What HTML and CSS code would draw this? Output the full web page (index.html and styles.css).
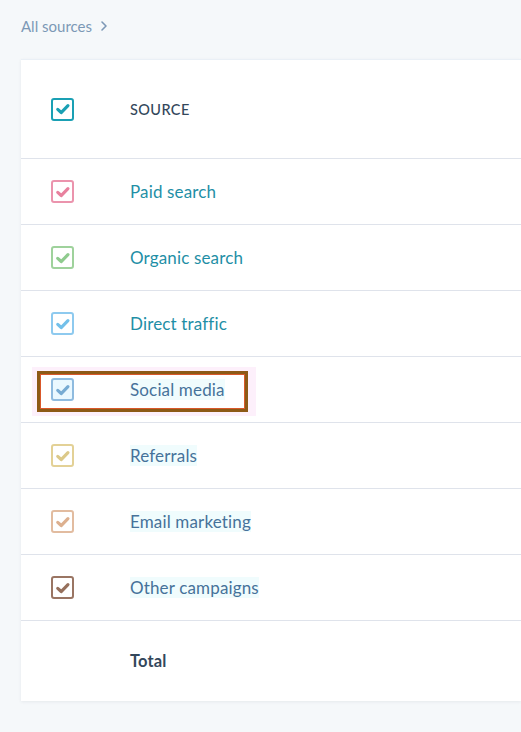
FILE: index.html
```html
<!DOCTYPE html>
<html>
<head>
<meta charset="utf-8">
<link rel="stylesheet" href="styles.css">
</head>
<body>
<nav class="crumb">All sources <svg class="chev" viewBox="0 0 8 12"><path d="M2 2l4 4-4 4"/></svg></nav>
<div class="card">
  <div class="row head">
    <span class="box c-main"><svg viewBox="0 0 24 24"><path d="M5 12.5l4.6 4.2 9-9.2"/></svg></span>
    <span class="label hd">SOURCE</span>
  </div>
  <div class="row">
    <span class="box c-pink"><svg viewBox="0 0 24 24"><path d="M5 12.5l4.6 4.2 9-9.2"/></svg></span>
    <span class="label">Paid search</span>
  </div>
  <div class="row">
    <span class="box c-green"><svg viewBox="0 0 24 24"><path d="M5 12.5l4.6 4.2 9-9.2"/></svg></span>
    <span class="label">Organic search</span>
  </div>
  <div class="row">
    <span class="box c-blue"><svg viewBox="0 0 24 24"><path d="M5 12.5l4.6 4.2 9-9.2"/></svg></span>
    <span class="label">Direct traffic</span>
  </div>
  <div class="row hl-row">
    <div class="hl-glow"></div>
    <div class="hl-frame"></div>
    <span class="box c-sky"><svg viewBox="0 0 24 24"><path d="M5 12.5l4.6 4.2 9-9.2"/></svg></span>
    <span class="label alt">Social media</span>
  </div>
  <div class="row">
    <span class="box c-yellow"><svg viewBox="0 0 24 24"><path d="M5 12.5l4.6 4.2 9-9.2"/></svg></span>
    <span class="label alt">Referrals</span>
  </div>
  <div class="row">
    <span class="box c-peach"><svg viewBox="0 0 24 24"><path d="M5 12.5l4.6 4.2 9-9.2"/></svg></span>
    <span class="label alt">Email marketing</span>
  </div>
  <div class="row">
    <span class="box c-brown"><svg viewBox="0 0 24 24"><path d="M5 12.5l4.6 4.2 9-9.2"/></svg></span>
    <span class="label alt">Other campaigns</span>
  </div>
  <div class="row total">
    <span class="box empty"></span>
    <span class="label tot">Total</span>
  </div>
</div>
</body>
</html>
```
FILE: styles.css
```css
* { box-sizing: border-box; }
html, body { margin: 0; padding: 0; }
body {
  background: #f5f8fa;
  font-family: "Lato", "Open Sans", sans-serif;
  width: 521px;
  height: 732px;
  overflow: hidden;
}
.crumb {
  display: flex;
  align-items: flex-start;
  padding: 15px 0 0 21px;
  height: 59px;
  font-size: 15px;
  color: #7c98b6;
  line-height: 22px;
}
.chev {
  width: 8px;
  height: 12px;
  margin: 5px 0 0 8px;
  fill: none;
  stroke: #7c98b6;
  stroke-width: 1.6;
  stroke-linecap: round;
  stroke-linejoin: round;
}
.card {
  margin-left: 21px;
  background: #fff;
  box-shadow: 0 1px 3px rgba(45, 62, 80, 0.08);
  border-top: 1px solid #eaf0f6;
}
.row {
  position: relative;
  display: flex;
  align-items: center;
  height: 66px;
  border-bottom: 1px solid #dfe3eb;
  padding-left: 30px;
}
.row.head { height: 99px; }
.row.total { height: 80px; border-bottom: none; }
.box {
  width: 23px;
  height: 23px;
  border: 2px solid;
  border-radius: 3px;
  display: flex;
  align-items: center;
  justify-content: center;
  flex: none;
  position: relative;
  z-index: 2;
}
.box svg {
  width: 18px;
  height: 18px;
  fill: none;
  stroke: currentColor;
  stroke-width: 4.2;
  stroke-linecap: round;
  stroke-linejoin: round;
}
.box.empty { border-color: transparent; }
.c-main { color: #1aa0b4; border-color: #1aa0b4; }
.c-pink { color: #e8819e; border-color: #eb94ad; }
.c-green { color: #8fcb8e; border-color: #9fd29c; }
.c-blue { color: #73c0ea; border-color: #8ecaef; }
.c-sky { color: #77abd3; border-color: #8fbbdf; background: #eaf8ff; }
.c-yellow { color: #dcc989; border-color: #e3d196; }
.c-peach { color: #ddb08f; border-color: #e2bca0; }
.c-brown { color: #96705c; border-color: #9a7563; }
.label {
  margin-left: 56px;
  font-size: 17px;
  color: #1f8fa6;
  letter-spacing: 0.15px;
  position: relative;
  z-index: 2;
}
.label.alt { color: #46729a; background: #f0fcfd; }
.label.hd {
  font-size: 14.5px;
  color: #33475b;
  font-weight: 500;
  letter-spacing: 0.4px;
}
.label.tot {
  font-size: 16.5px;
  color: #33475b;
  font-weight: 700;
}
.hl-glow {
  position: absolute;
  left: 11px;
  top: 10px;
  width: 224px;
  height: 49px;
  background: #fdf0fb;
  z-index: 0;
}
.hl-frame {
  position: absolute;
  left: 16px;
  top: 14px;
  width: 211px;
  height: 41px;
  border: 3px solid #8d5a16;
  box-shadow: inset 0 0 0 1px #d9582a;
  background: #fff;
  z-index: 1;
}
```
